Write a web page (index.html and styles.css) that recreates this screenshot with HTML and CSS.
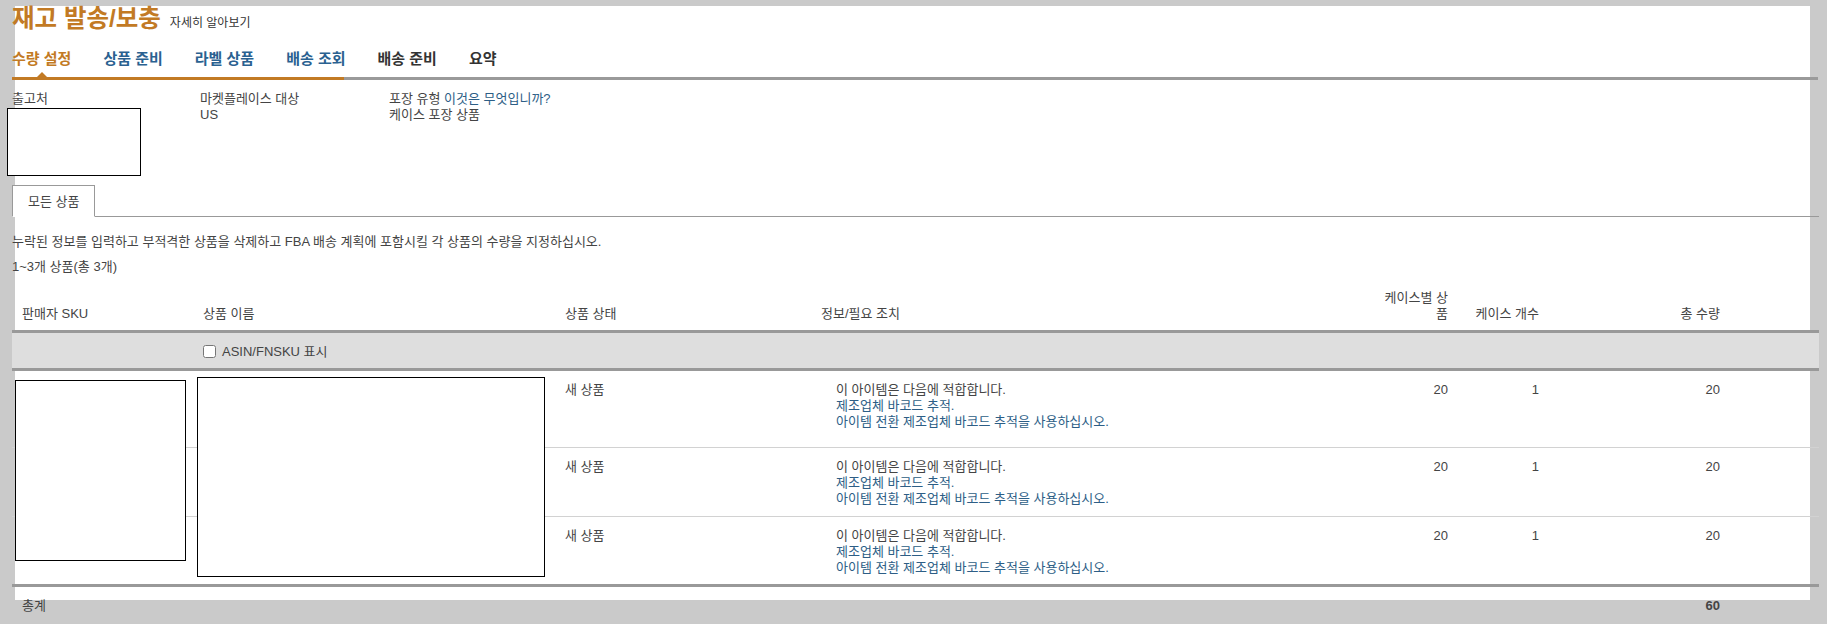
FILE: index.html
```html
<!DOCTYPE html>
<html lang="ko">
<head>
<meta charset="utf-8">
<title>재고 발송/보충</title>
<link rel="stylesheet" href="styles.css">
</head>
<body>
<div class="page">
  <div class="content">
    <header class="title-row">
      <h1 class="title">재고 발송/보충</h1>
      <a class="learn">자세히 알아보기</a>
    </header>

    <nav class="steps">
      <div class="step-list">
        <span class="step step-current">수량 설정<i class="caret"></i></span>
        <span class="step step-done">상품 준비</span>
        <span class="step step-done">라벨 상품</span>
        <span class="step step-done">배송 조회</span>
        <span class="step">배송 준비</span>
        <span class="step">요약</span>
      </div>
      <div class="progress"><div class="progress-fill" style="width:332px"></div></div>
    </nav>

    <section class="summary">
      <div class="field">
        <div>출고처</div>
        <div class="redact redact-address"></div>
      </div>
      <div class="field">
        <div>마켓플레이스 대상</div>
        <div>US</div>
      </div>
      <div class="field">
        <div>포장 유형 <a class="link">이것은 무엇입니까?</a></div>
        <div>케이스 포장 상품</div>
      </div>
    </section>

    <div class="tabstrip">
      <div class="tab">모든 상품</div>
    </div>

    <p class="instructions">누락된 정보를 입력하고 부적격한 상품을 삭제하고 FBA 배송 계획에 포함시킬 각 상품의 수량을 지정하십시오.</p>
    <p class="count">1~3개 상품(총 3개)</p>

    <div class="table">
      <div class="grid thead">
        <div class="cell">판매자 SKU</div>
        <div class="cell">상품 이름</div>
        <div class="cell">상품 상태</div>
        <div class="cell">정보/필요 조치</div>
        <div class="cell num"><span class="wrap-head">케이스별 상품</span></div>
        <div class="cell num">케이스 개수</div>
        <div class="cell num">총 수량</div>
        <div class="cell"></div>
      </div>

      <div class="grid filter">
        <div class="cell"></div>
        <div class="cell">
          <label class="check"><input type="checkbox" class="checkbox"> ASIN/FNSKU 표시</label>
        </div>
      </div>

      <div class="tbody">
        <div class="grid row row-first">
          <div class="cell cell-box"><div class="redact redact-sku"></div></div>
          <div class="cell cell-box"><div class="redact redact-name"></div></div>
          <div class="cell">새 상품</div>
          <div class="cell">
            <div class="info-msg">
              <div>이 아이템은 다음에 적합합니다.</div>
              <div class="link">제조업체 바코드 추적.</div>
              <div class="link">아이템 전환 제조업체 바코드 추적을 사용하십시오.</div>
            </div>
          </div>
          <div class="cell num">20</div>
          <div class="cell num">1</div>
          <div class="cell num">20</div>
          <div class="cell"></div>
        </div>

        <div class="grid row">
          <div class="cell"></div>
          <div class="cell"></div>
          <div class="cell">새 상품</div>
          <div class="cell">
            <div class="info-msg">
              <div>이 아이템은 다음에 적합합니다.</div>
              <div class="link">제조업체 바코드 추적.</div>
              <div class="link">아이템 전환 제조업체 바코드 추적을 사용하십시오.</div>
            </div>
          </div>
          <div class="cell num">20</div>
          <div class="cell num">1</div>
          <div class="cell num">20</div>
          <div class="cell"></div>
        </div>

        <div class="grid row row-last">
          <div class="cell"></div>
          <div class="cell"></div>
          <div class="cell">새 상품</div>
          <div class="cell">
            <div class="info-msg">
              <div>이 아이템은 다음에 적합합니다.</div>
              <div class="link">제조업체 바코드 추적.</div>
              <div class="link">아이템 전환 제조업체 바코드 추적을 사용하십시오.</div>
            </div>
          </div>
          <div class="cell num">20</div>
          <div class="cell num">1</div>
          <div class="cell num">20</div>
          <div class="cell"></div>
        </div>
      </div>

      <div class="grid tfoot">
        <div class="cell">총계</div>
        <div class="cell"></div>
        <div class="cell"></div>
        <div class="cell"></div>
        <div class="cell num"></div>
        <div class="cell num"></div>
        <div class="cell num total">60</div>
        <div class="cell"></div>
      </div>
    </div>
  </div>
</div>
</body>
</html>
```

FILE: styles.css
```css
html, body {
  margin: 0;
  padding: 0;
}

body {
  background: #cacaca;
  font-family: "Liberation Sans", "Noto Sans CJK KR", Arial, sans-serif;
  font-size: 13px;
  line-height: 16px;
  color: #444;
  height: 624px;
  overflow: hidden;
}

.page {
  margin: 15px 0 0 15px;
  width: 1795px;
  height: 594px;
  background: #fff;
}

.content {
  margin-left: -3px;
  width: 1807px;
}

/* Title */
.title-row {
  display: flex;
  align-items: baseline;
  gap: 9px;
  margin-top: -9px;
}

.title {
  margin: 0;
  font-size: 24.5px;
  line-height: 26px;
  font-weight: bold;
  color: #c27a24;
}

.learn {
  font-size: 12px;
  color: #333;
}

/* Steps */
.steps {
  padding-top: 18px;
}

.step-list {
  display: flex;
  gap: 32px;
  padding-bottom: 9px;
}

.step {
  position: relative;
  font-size: 15px;
  line-height: 18px;
  font-weight: bold;
  color: #333;
}

.step-current {
  color: #c27a24;
}

.step-done {
  color: #2a6190;
}

.caret {
  position: absolute;
  left: 25px;
  bottom: -9px;
  width: 0;
  height: 0;
  border-left: 5px solid transparent;
  border-right: 5px solid transparent;
  border-bottom: 5px solid #c27a24;
}

.progress {
  height: 3px;
  background: #9a9a9a;
  margin-right: 1px;
}

.progress-fill {
  height: 3px;
  background: #c27a24;
}

/* Summary */
.summary {
  display: grid;
  grid-template-columns: 188px 189px 1fr;
  padding-top: 11px;
  height: 105px;
  box-sizing: border-box;
}

.field {
  position: relative;
}

.link {
  color: #2d5e86;
}

.redact {
  position: absolute;
  box-sizing: border-box;
  border: 1px solid #000;
  background: #fff;
}

.redact-address {
  left: -5px;
  top: 17px;
  width: 134px;
  height: 68px;
}

/* Tabs */
.tabstrip {
  display: flex;
  height: 31px;
  border-bottom: 1px solid #999;
}

.tab {
  box-sizing: border-box;
  height: 32px;
  padding: 8px 15px 0;
  border: 1px solid #999;
  border-bottom-color: #fff;
  background: #fff;
}

.instructions {
  margin: 17px 0 0;
}

.count {
  margin: 9px 0 0;
}

/* Table */
.grid {
  display: grid;
  grid-template-columns: 182px 362px 256px 564px 81px 91px 181px 90px;
}

.cell {
  padding: 0 9px;
}

.cell:first-child {
  padding-left: 10px;
}

.num {
  text-align: right;
  padding-left: 0;
}

.thead {
  box-sizing: border-box;
  height: 58px;
  padding-bottom: 8px;
  align-items: end;
  border-bottom: 3px solid #999;
}

.wrap-head {
  display: block;
  margin-left: auto;
  width: 68px;
}

.filter {
  box-sizing: border-box;
  height: 38px;
  padding-top: 2px;
  align-items: center;
  background: #dedede;
  border-bottom: 3px solid #999;
}

.check {
  display: flex;
  align-items: center;
  gap: 6px;
}

.checkbox {
  margin: 0;
  width: 13px;
  height: 13px;
}

.tbody {
  border-bottom: 3px solid #999;
}

.row {
  box-sizing: border-box;
  height: 69px;
  padding-top: 11px;
  align-items: start;
  border-bottom: 1px solid #d2d2d2;
}

.row-first {
  height: 77px;
}

.row-last {
  height: 67px;
  border-bottom: none;
}

.cell-box {
  position: relative;
}

.redact-sku {
  left: 3px;
  top: -2px;
  width: 171px;
  height: 181px;
}

.redact-name {
  left: 3px;
  top: -5px;
  width: 348px;
  height: 200px;
}

.info-msg {
  margin-left: 15px;
}

.tfoot {
  padding-top: 11px;
}

.total {
  font-weight: bold;
}
```
